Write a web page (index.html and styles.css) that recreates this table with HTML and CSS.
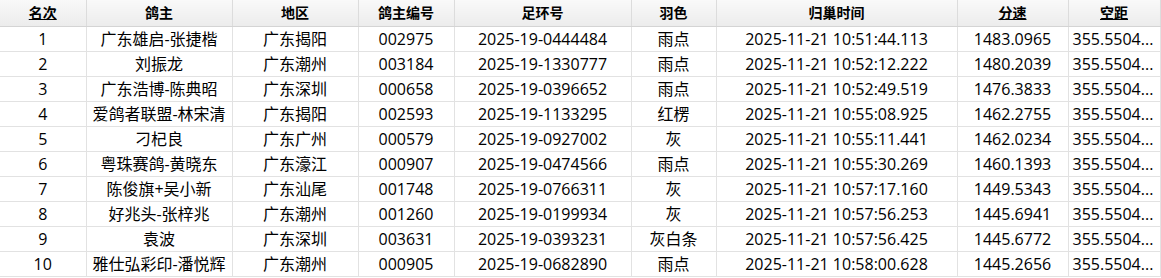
FILE: index.html
```html
<!DOCTYPE html>
<html lang="zh-CN">
<head>
<meta charset="utf-8">
<title>归巢成绩</title>
<link rel="stylesheet" href="styles.css">
</head>
<body>
<table class="grid">
  <colgroup>
    <col class="c1"><col class="c2"><col class="c3"><col class="c4"><col class="c5"><col class="c6"><col class="c7"><col class="c8"><col class="c9">
  </colgroup>
  <thead>
    <tr>
      <th class="sort">名次</th><th>鸽主</th><th>地区</th><th>鸽主编号</th><th>足环号</th><th>羽色</th><th>归巢时间</th><th class="sort">分速</th><th class="sort">空距</th>
    </tr>
  </thead>
  <tbody>
    <tr><td>1</td><td>广东雄启-张捷楷</td><td>广东揭阳</td><td>002975</td><td>2025-19-0444484</td><td>雨点</td><td>2025-11-21 10:51:44.113</td><td>1483.0965</td><td class="trunc">355.5504...</td></tr>
    <tr><td>2</td><td>刘振龙</td><td>广东潮州</td><td>003184</td><td>2025-19-1330777</td><td>雨点</td><td>2025-11-21 10:52:12.222</td><td>1480.2039</td><td class="trunc">355.5504...</td></tr>
    <tr><td>3</td><td>广东浩博-陈典昭</td><td>广东深圳</td><td>000658</td><td>2025-19-0396652</td><td>雨点</td><td>2025-11-21 10:52:49.519</td><td>1476.3833</td><td class="trunc">355.5504...</td></tr>
    <tr><td>4</td><td>爱鸽者联盟-林宋清</td><td>广东揭阳</td><td>002593</td><td>2025-19-1133295</td><td>红楞</td><td>2025-11-21 10:55:08.925</td><td>1462.2755</td><td class="trunc">355.5504...</td></tr>
    <tr><td>5</td><td>刁杞良</td><td>广东广州</td><td>000579</td><td>2025-19-0927002</td><td>灰</td><td>2025-11-21 10:55:11.441</td><td>1462.0234</td><td class="trunc">355.5504...</td></tr>
    <tr><td>6</td><td>粤珠赛鸽-黄晓东</td><td>广东濠江</td><td>000907</td><td>2025-19-0474566</td><td>雨点</td><td>2025-11-21 10:55:30.269</td><td>1460.1393</td><td class="trunc">355.5504...</td></tr>
    <tr><td>7</td><td>陈俊旗+吴小新</td><td>广东汕尾</td><td>001748</td><td>2025-19-0766311</td><td>灰</td><td>2025-11-21 10:57:17.160</td><td>1449.5343</td><td class="trunc">355.5504...</td></tr>
    <tr><td>8</td><td>好兆头-张梓兆</td><td>广东潮州</td><td>001260</td><td>2025-19-0199934</td><td>灰</td><td>2025-11-21 10:57:56.253</td><td>1445.6941</td><td class="trunc">355.5504...</td></tr>
    <tr><td>9</td><td>袁波</td><td>广东深圳</td><td>003631</td><td>2025-19-0393231</td><td>灰白条</td><td>2025-11-21 10:57:56.425</td><td>1445.6772</td><td class="trunc">355.5504...</td></tr>
    <tr><td>10</td><td>雅仕弘彩印-潘悦辉</td><td>广东潮州</td><td>000905</td><td>2025-19-0682890</td><td>雨点</td><td>2025-11-21 10:58:00.628</td><td>1445.2656</td><td class="trunc">355.5504...</td></tr>
  </tbody>
</table>
</body>
</html>
```
FILE: styles.css
```css
html, body {
  margin: 0;
  padding: 0;
  background: #ffffff;
}

.grid {
  border-collapse: collapse;
  table-layout: fixed;
  width: 1160px;
  font-family: "Open Sans", "Noto Sans CJK SC", sans-serif;
  font-size: 16px;
  color: #000000;
}

.c1 { width: 86px; }
.c2 { width: 146px; }
.c3 { width: 126px; }
.c4 { width: 96px; }
.c5 { width: 177px; }
.c6 { width: 85px; }
.c7 { width: 241px; }
.c8 { width: 111px; }
.c9 { width: 92px; }

.grid th,
.grid td {
  padding: 0 4px;
  text-align: center;
  white-space: nowrap;
  overflow: hidden;
  border-right: 1px solid #e2e2e2;
  border-bottom: 1px solid #e2e2e2;
  line-height: 20px;
}

.grid th {
  height: 26px;
  font-weight: bold;
  font-size: 14px;
  color: #000000;
  background: linear-gradient(#f9f9f9, #ececec);
  border-right: 1px solid #dcdcdc;
  border-bottom: 1px solid #d4d4d4;
}

.grid th.sort {
  text-decoration: underline;
}

.grid td {
  height: 24px;
}

.grid td.trunc {
  text-align: left;
}
```
